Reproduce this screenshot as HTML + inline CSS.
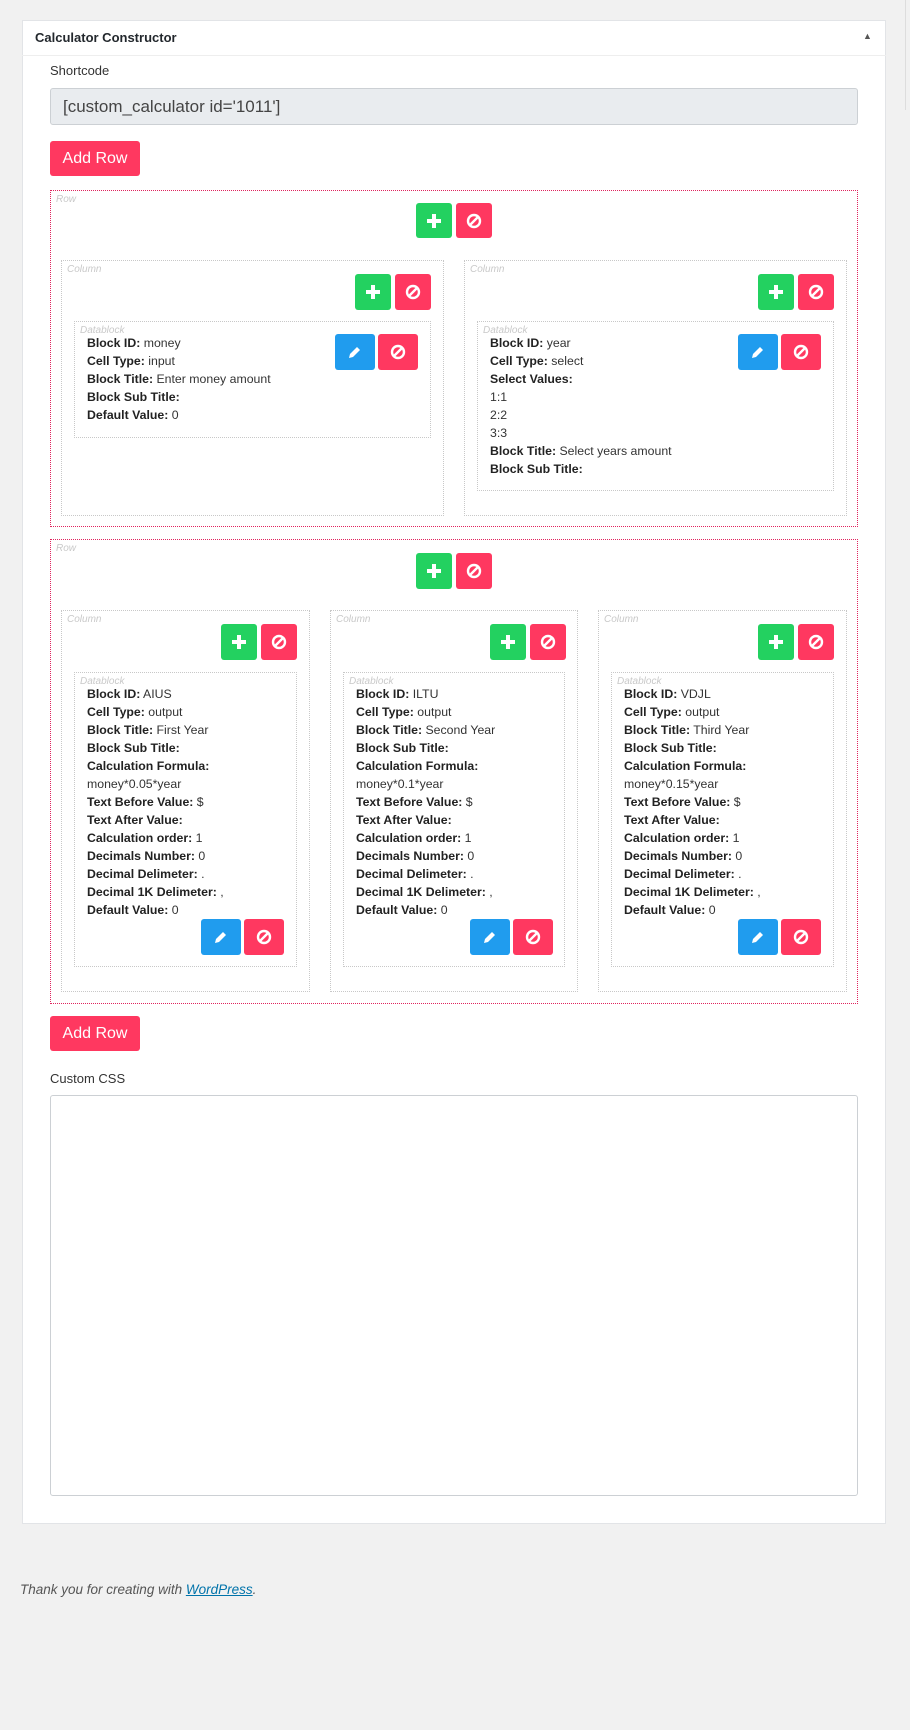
<!DOCTYPE html>
<html><head><meta charset="utf-8"><style>
*{box-sizing:border-box;margin:0;padding:0}
body{width:910px;height:1730px;background:#f1f1f1;font-family:"Liberation Sans",sans-serif;color:#23282d;position:relative;overflow:hidden}
.a{position:absolute}
.panel{left:22px;top:20px;width:864px;height:1504px;background:#fff;border:1px solid #e2e4e7}
.hdr{left:22px;top:20px;width:864px;height:36px;border-bottom:1px solid #eee}
.btn{position:absolute;width:36px;height:36px;border-radius:3px;display:flex;align-items:center;justify-content:center}
.g{background:#23d160}.r{background:#ff3860}.b{background:#209cee}
.dash{border:1px dotted #c8c8c8}
.rowb{border:1px dotted #e0245e}
.lbl{position:absolute;font-size:10px;font-style:italic;color:#c9c9c9;left:5px;top:3px}
.txt{position:absolute;font-size:12.3px;line-height:18px;color:#333}
.txt b{color:#222}
.addrow{position:absolute;left:50px;width:90px;height:35px;background:#ff3860;color:#fff;border-radius:3px;font-size:16px;display:flex;align-items:center;justify-content:center}
</style></head><body>
<svg width="0" height="0" style="position:absolute"><defs>
<g id="plus"><path d="M-2 -7h4v5h5v4h-5v5h-4v-5h-5v-4h5z" fill="#fff"/></g>
<g id="ban"><circle r="6" fill="none" stroke="#fff" stroke-width="2.4"/><path d="M-4 4L4 -4" stroke="#fff" stroke-width="2.4"/></g>
<g id="pen"><path d="M-6 6l1-4 7-7 3 3-7 7z" fill="#fff"/></g>
</defs></svg>
<div class="a" style="left:905px;top:0;width:1px;height:110px;background:#ddd"></div>
<div class="a panel"></div>
<div class="a hdr"></div>
<div class="a" style="left:35px;top:30px;font-size:13px;font-weight:bold;color:#23282d">Calculator Constructor</div>
<div class="a" style="left:863px;top:31px;font-size:9px;color:#555">▲</div>
<div class="a" style="left:50px;top:63px;font-size:13px;color:#333">Shortcode</div>
<div class="a" style="left:50px;top:88px;width:808px;height:37px;background:#e9ecef;border:1px solid #ccd0d4;border-radius:3px;font-size:17px;color:#444;padding:8px 12px">[custom_calculator id='1011']</div>
<div class="addrow" style="top:141px">Add Row</div>

<!-- Row 1 -->
<div class="a rowb" style="left:50px;top:190px;width:808px;height:337px"><div class="lbl">Row</div></div>
<div class="btn g" style="left:416px;top:203px;height:35px"><svg width="20" height="20" viewBox="-10 -10 20 20"><use href="#plus"/></svg></div>
<div class="btn r" style="left:456px;top:203px;height:35px"><svg width="20" height="20" viewBox="-10 -10 20 20"><use href="#ban"/></svg></div>

<div class="a dash" style="left:61px;top:260px;width:383px;height:256px"><div class="lbl">Column</div></div>
<div class="btn g" style="left:355px;top:274px"><svg width="20" height="20" viewBox="-10 -10 20 20"><use href="#plus"/></svg></div>
<div class="btn r" style="left:395px;top:274px"><svg width="20" height="20" viewBox="-10 -10 20 20"><use href="#ban"/></svg></div>
<div class="a dash" style="left:74px;top:321px;width:357px;height:117px"><div class="lbl">Datablock</div></div>
<div class="btn b" style="left:335px;top:334px;width:40px"><svg width="20" height="20" viewBox="-10 -10 20 20"><use href="#pen"/></svg></div>
<div class="btn r" style="left:378px;top:334px;width:40px"><svg width="20" height="20" viewBox="-10 -10 20 20"><use href="#ban"/></svg></div>
<div class="txt" style="left:87px;top:334px"><b>Block ID:</b> money<br><b>Cell Type:</b> input<br><b>Block Title:</b> Enter money amount<br><b>Block Sub Title:</b><br><b>Default Value:</b> 0</div>

<div class="a dash" style="left:464px;top:260px;width:383px;height:256px"><div class="lbl">Column</div></div>
<div class="btn g" style="left:758px;top:274px"><svg width="20" height="20" viewBox="-10 -10 20 20"><use href="#plus"/></svg></div>
<div class="btn r" style="left:798px;top:274px"><svg width="20" height="20" viewBox="-10 -10 20 20"><use href="#ban"/></svg></div>
<div class="a dash" style="left:477px;top:321px;width:357px;height:170px"><div class="lbl">Datablock</div></div>
<div class="btn b" style="left:738px;top:334px;width:40px"><svg width="20" height="20" viewBox="-10 -10 20 20"><use href="#pen"/></svg></div>
<div class="btn r" style="left:781px;top:334px;width:40px"><svg width="20" height="20" viewBox="-10 -10 20 20"><use href="#ban"/></svg></div>
<div class="txt" style="left:490px;top:334px"><b>Block ID:</b> year<br><b>Cell Type:</b> select<br><b>Select Values:</b><br>1:1<br>2:2<br>3:3<br><b>Block Title:</b> Select years amount<br><b>Block Sub Title:</b></div>

<!-- Row 2 -->
<div class="a rowb" style="left:50px;top:539px;width:808px;height:465px"><div class="lbl">Row</div></div>
<div class="btn g" style="left:416px;top:553px"><svg width="20" height="20" viewBox="-10 -10 20 20"><use href="#plus"/></svg></div>
<div class="btn r" style="left:456px;top:553px"><svg width="20" height="20" viewBox="-10 -10 20 20"><use href="#ban"/></svg></div>

<div class="a dash" style="left:61px;top:610px;width:249px;height:382px"><div class="lbl">Column</div></div>
<div class="btn g" style="left:221px;top:624px"><svg width="20" height="20" viewBox="-10 -10 20 20"><use href="#plus"/></svg></div>
<div class="btn r" style="left:261px;top:624px"><svg width="20" height="20" viewBox="-10 -10 20 20"><use href="#ban"/></svg></div>
<div class="a dash" style="left:74px;top:672px;width:223px;height:295px"><div class="lbl">Datablock</div></div>
<div class="btn b" style="left:201px;top:919px;width:40px"><svg width="20" height="20" viewBox="-10 -10 20 20"><use href="#pen"/></svg></div>
<div class="btn r" style="left:244px;top:919px;width:40px"><svg width="20" height="20" viewBox="-10 -10 20 20"><use href="#ban"/></svg></div>
<div class="txt" style="left:87px;top:685px"><b>Block ID:</b> AIUS<br><b>Cell Type:</b> output<br><b>Block Title:</b> First Year<br><b>Block Sub Title:</b><br><b>Calculation Formula:</b><br>money*0.05*year<br><b>Text Before Value:</b> $<br><b>Text After Value:</b><br><b>Calculation order:</b> 1<br><b>Decimals Number:</b> 0<br><b>Decimal Delimeter:</b> .<br><b>Decimal 1K Delimeter:</b> ,<br><b>Default Value:</b> 0</div>

<div class="a dash" style="left:330px;top:610px;width:248px;height:382px"><div class="lbl">Column</div></div>
<div class="btn g" style="left:490px;top:624px"><svg width="20" height="20" viewBox="-10 -10 20 20"><use href="#plus"/></svg></div>
<div class="btn r" style="left:530px;top:624px"><svg width="20" height="20" viewBox="-10 -10 20 20"><use href="#ban"/></svg></div>
<div class="a dash" style="left:343px;top:672px;width:222px;height:295px"><div class="lbl">Datablock</div></div>
<div class="btn b" style="left:470px;top:919px;width:40px"><svg width="20" height="20" viewBox="-10 -10 20 20"><use href="#pen"/></svg></div>
<div class="btn r" style="left:513px;top:919px;width:40px"><svg width="20" height="20" viewBox="-10 -10 20 20"><use href="#ban"/></svg></div>
<div class="txt" style="left:356px;top:685px"><b>Block ID:</b> ILTU<br><b>Cell Type:</b> output<br><b>Block Title:</b> Second Year<br><b>Block Sub Title:</b><br><b>Calculation Formula:</b><br>money*0.1*year<br><b>Text Before Value:</b> $<br><b>Text After Value:</b><br><b>Calculation order:</b> 1<br><b>Decimals Number:</b> 0<br><b>Decimal Delimeter:</b> .<br><b>Decimal 1K Delimeter:</b> ,<br><b>Default Value:</b> 0</div>

<div class="a dash" style="left:598px;top:610px;width:249px;height:382px"><div class="lbl">Column</div></div>
<div class="btn g" style="left:758px;top:624px"><svg width="20" height="20" viewBox="-10 -10 20 20"><use href="#plus"/></svg></div>
<div class="btn r" style="left:798px;top:624px"><svg width="20" height="20" viewBox="-10 -10 20 20"><use href="#ban"/></svg></div>
<div class="a dash" style="left:611px;top:672px;width:223px;height:295px"><div class="lbl">Datablock</div></div>
<div class="btn b" style="left:738px;top:919px;width:40px"><svg width="20" height="20" viewBox="-10 -10 20 20"><use href="#pen"/></svg></div>
<div class="btn r" style="left:781px;top:919px;width:40px"><svg width="20" height="20" viewBox="-10 -10 20 20"><use href="#ban"/></svg></div>
<div class="txt" style="left:624px;top:685px"><b>Block ID:</b> VDJL<br><b>Cell Type:</b> output<br><b>Block Title:</b> Third Year<br><b>Block Sub Title:</b><br><b>Calculation Formula:</b><br>money*0.15*year<br><b>Text Before Value:</b> $<br><b>Text After Value:</b><br><b>Calculation order:</b> 1<br><b>Decimals Number:</b> 0<br><b>Decimal Delimeter:</b> .<br><b>Decimal 1K Delimeter:</b> ,<br><b>Default Value:</b> 0</div>

<div class="addrow" style="top:1016px">Add Row</div>
<div class="a" style="left:50px;top:1071px;font-size:13px;color:#333">Custom CSS</div>
<div class="a" style="left:50px;top:1095px;width:808px;height:401px;border:1px solid #ccd0d4;border-radius:3px;background:#fff"></div>
<div class="a" style="left:20px;top:1582px;font-size:13.5px;font-style:italic;color:#555">Thank you for creating with <span style="color:#0073aa;text-decoration:underline">WordPress</span>.</div>
</body></html>
